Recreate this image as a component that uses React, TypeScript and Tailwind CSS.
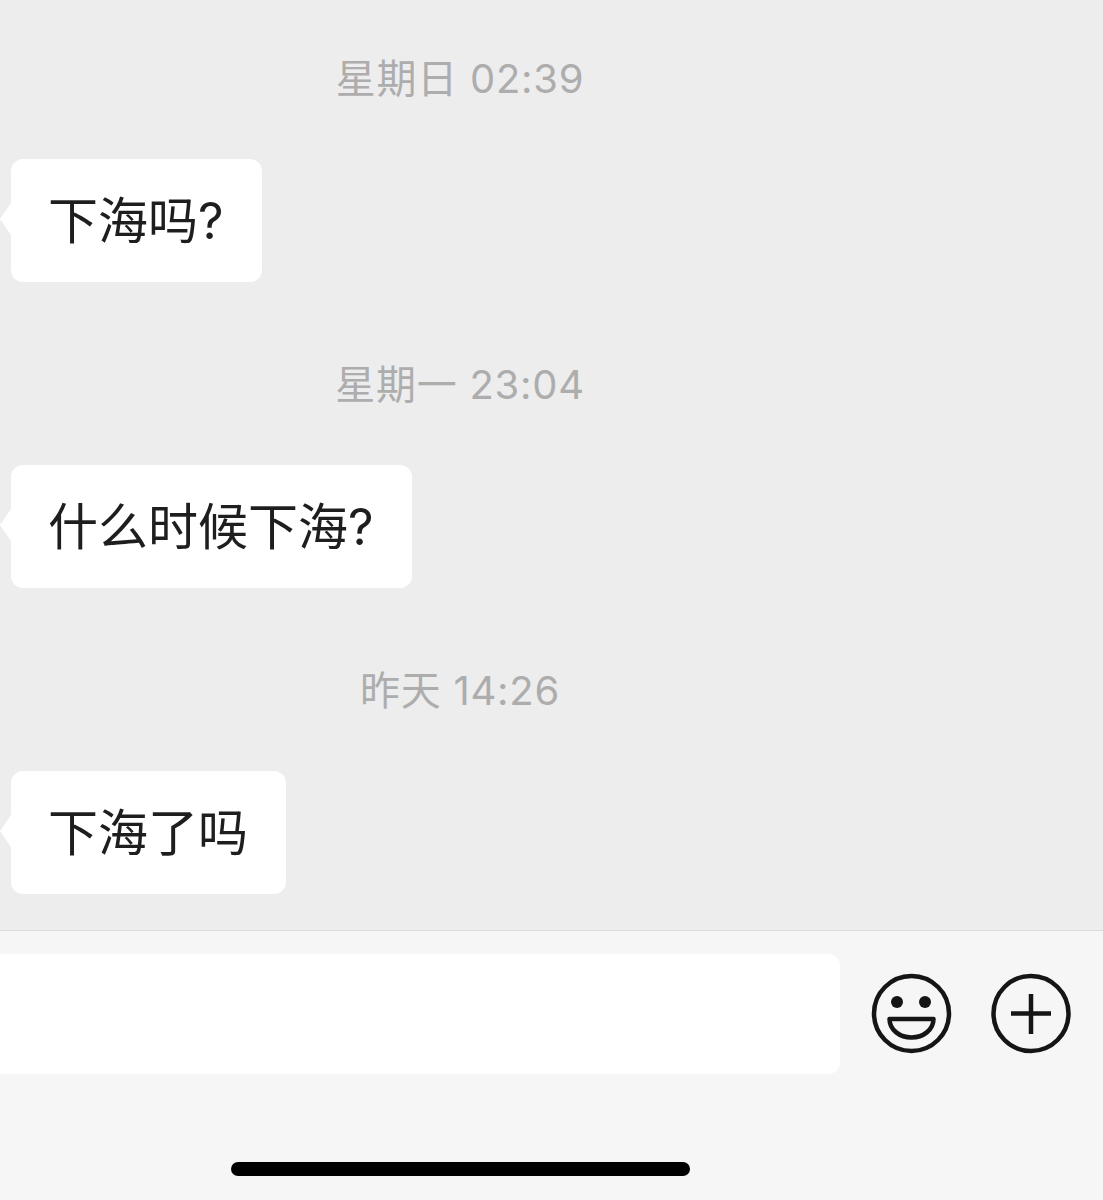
const fontStack = "font-['Inter','Noto_Sans_CJK_SC',sans-serif]";

const messages = [
  { time: "星期日 02:39", text: "下海吗?" },
  { time: "星期一 23:04", text: "什么时候下海?" },
  { time: "昨天 14:26", text: "下海了吗" },
];

function Message({ time, text }: { time: string; text: string }) {
  return (
    <div className="flex flex-col">
      <div className="flex h-12 w-[920px] items-center justify-center pt-[2px] text-[40px] leading-[48px] tracking-[0.75px] text-[#adadad]">
        {time}
      </div>
      <div className="relative mt-[57px] ml-[11px] flex h-[123px] w-fit items-center rounded-[12px] bg-white pt-[1px] pr-[38px] pl-[37px] text-[50px] leading-[60px] text-[#1e1e1e]">
        <span className="absolute top-[44px] left-[-11px] h-0 w-0 border-y-[16px] border-r-[11px] border-y-transparent border-r-white" />
        {text}
      </div>
    </div>
  );
}

export default function App() {
  return (
    <div className={`flex h-[1200px] w-[1103px] flex-col overflow-hidden bg-[#ededed] ${fontStack}`}>
      <div className="flex h-[930px] flex-col gap-[78px] pt-[54px]">
        {messages.map((m) => (
          <Message key={m.time} time={m.time} text={m.text} />
        ))}
      </div>

      <div className="flex flex-1 flex-col border-t border-[#dcdcdc] bg-[#f6f6f6]">
        <div className="mt-[23px] flex items-center">
          <div className="h-[120px] w-[840px] rounded-r-[12px] bg-white" />
          <svg className="mb-[2px] ml-[31px]" width="81" height="81" viewBox="0 0 81 81" fill="none" stroke="#151515">
            <circle cx="40.5" cy="40.5" r="37.5" strokeWidth="4.5" />
            <circle cx="26" cy="29" r="6" fill="#151515" stroke="none" />
            <circle cx="54" cy="29" r="6" fill="#151515" stroke="none" />
            <path d="M18.5 46H62.5C62.5 57 52 64.5 40.5 64.5C29 64.5 18.5 57 18.5 46Z" strokeWidth="4.5" strokeLinejoin="round" />
          </svg>
          <svg className="mb-[2px] ml-[39px]" width="81" height="81" viewBox="0 0 81 81" fill="none" stroke="#151515">
            <circle cx="40" cy="40.5" r="37.5" strokeWidth="4.5" />
            <path d="M20 40.5H60M40 21V61" strokeWidth="4.5" />
          </svg>
        </div>
        <div className="mt-[88px] ml-[231px] h-[14px] w-[459px] rounded-full bg-black" />
      </div>
    </div>
  );
}
